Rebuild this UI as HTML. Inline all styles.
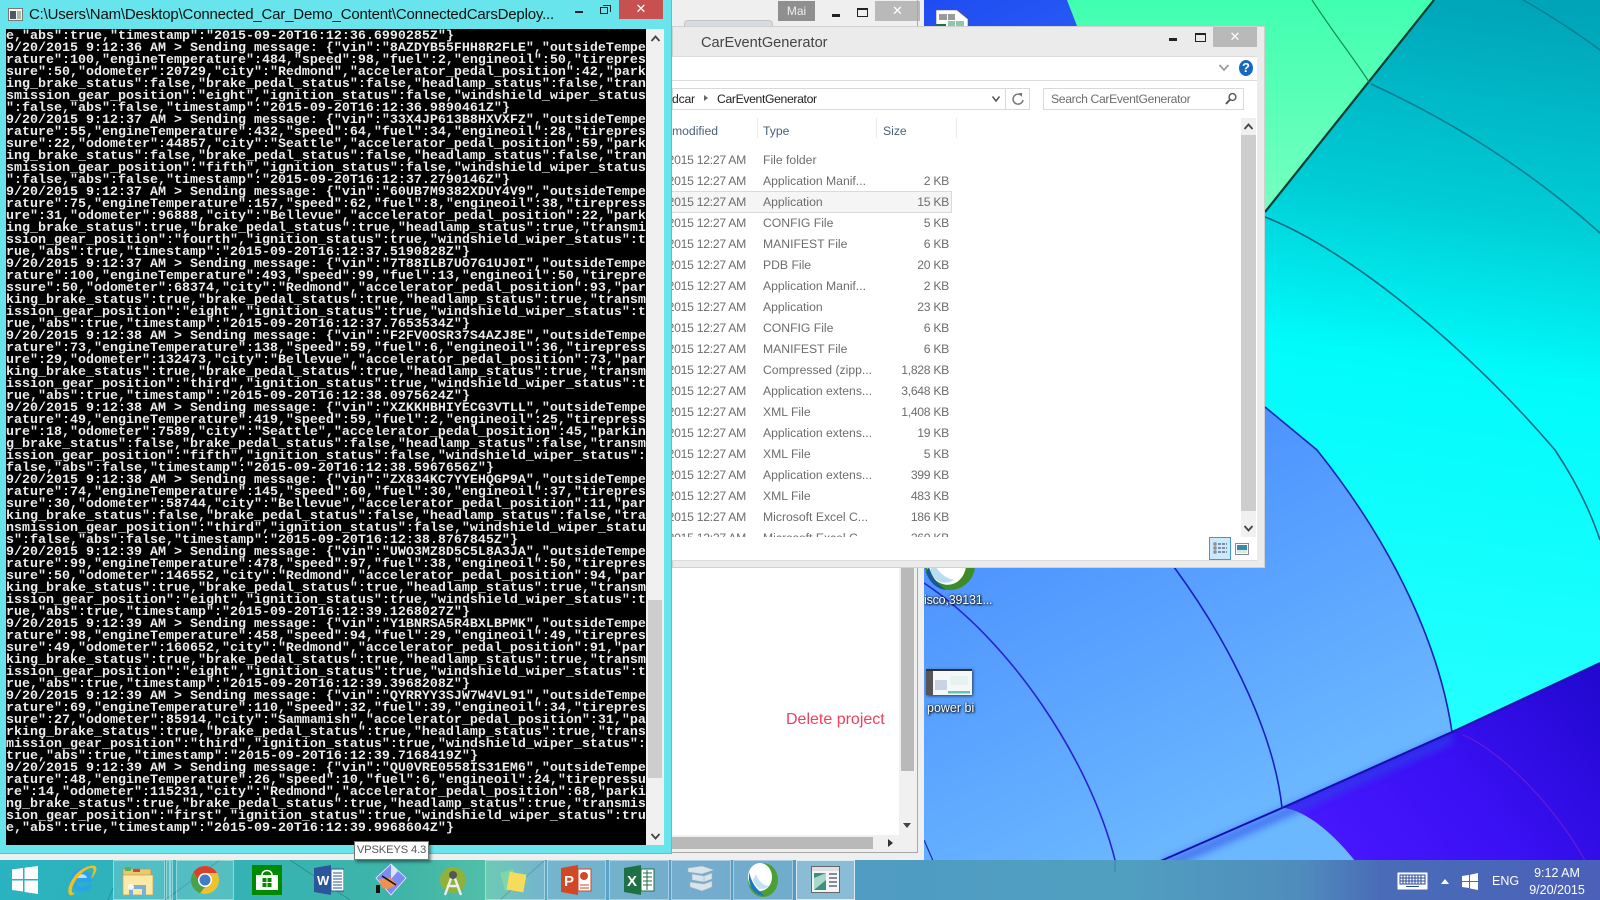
<!DOCTYPE html>
<html><head><meta charset="utf-8"><style>
html,body{margin:0;padding:0;width:1600px;height:900px;overflow:hidden;background:#3f78fa}
*{box-sizing:border-box}
body{font-family:"Liberation Sans",sans-serif;position:relative}
.a{position:absolute}
.r{position:absolute;left:0;width:600px;height:16px;line-height:16px;font-size:12.2px;color:#6d6d6d;white-space:nowrap}
.r i{font-style:normal;position:absolute;top:0}
.r .d{left:-126px;width:200px;text-align:right;letter-spacing:-.28px}
.r .t{left:91px}
.r b{font-weight:normal;position:absolute;left:200px;width:77px;text-align:right;top:0;letter-spacing:-.3px}
.tb{position:absolute;top:860px;height:40px;background:rgba(255,255,255,.16);border:1px solid rgba(255,255,255,.38)}
pre{margin:0}
</style></head><body>

<svg class="a" style="left:0;top:0" width="1600" height="900" viewBox="0 0 1600 900">
<defs>
<linearGradient id="bl" gradientUnits="userSpaceOnUse" x1="924" y1="0" x2="1300" y2="800"><stop offset="0" stop-color="#1f4cf2"/><stop offset=".55" stop-color="#4b90ff"/><stop offset="1" stop-color="#6cb8ff"/></linearGradient>
<linearGradient id="te" gradientUnits="userSpaceOnUse" x1="1500" y1="0" x2="1400" y2="700"><stop offset="0" stop-color="#00a4b8"/><stop offset=".3" stop-color="#00cdd6"/><stop offset=".52" stop-color="#00fbfb"/><stop offset="1" stop-color="#22ffff"/></linearGradient>
<linearGradient id="gr" gradientUnits="userSpaceOnUse" x1="1300" y1="0" x2="1300" y2="220"><stop offset="0" stop-color="#40ffb0"/><stop offset="1" stop-color="#78ffc0"/></linearGradient>
<linearGradient id="in" gradientUnits="userSpaceOnUse" x1="1600" y1="680" x2="1330" y2="900"><stop offset="0" stop-color="#2208d0"/><stop offset=".5" stop-color="#3a10f4"/><stop offset="1" stop-color="#4a18ff"/></linearGradient>
<filter id="sf" x="-20%" y="-20%" width="140%" height="140%"><feGaussianBlur stdDeviation="4"/></filter>
</defs>
<rect width="1600" height="900" fill="url(#bl)"/>
<path d="M1067 0L1434 0L1265 215L1150 215Z" fill="url(#gr)"/>
<path d="M1434 0L1600 0L1600 663L1452 732C1440 650 1397 550 1317 450L1265 407L1200 300L1265 212Z" fill="url(#te)"/>
<path d="M1600 663L1452 732L1282 808C1300 808 1340 830 1382 900L1600 900Z" fill="url(#in)"/>
<path d="M1452 738L1282 814L1163 866" stroke="#2a48e8" stroke-width="10" fill="none" opacity=".6" filter="url(#sf)"/>
<path d="M1434 0L1265 212" stroke="#0c3c34" stroke-width="2.2" fill="none"/>
<path d="M1312 0C1335 35 1355 60 1369 82" stroke="#109050" stroke-width="1.2" fill="none"/>
<path d="M1371 84C1450 120 1530 170 1600 233" stroke="#0a7c90" stroke-width="1.6" fill="none"/>
<path d="M1523 0C1550 15 1580 35 1600 50" stroke="#0a7c90" stroke-width="1.4" fill="none"/>
<path d="M1265 217C1350 250 1470 350 1555 450C1575 480 1590 510 1600 540" stroke="#0a6a80" stroke-width="1.6" fill="none"/>
<path d="M1265 407L1317 450C1397 550 1440 650 1452 732" stroke="#1a20b8" stroke-width="1.6" fill="none"/>
<path d="M1600 663L1452 732L1282 808L1163 860L1067 900" stroke="#1410b0" stroke-width="2" fill="none"/>
<path d="M1174 567C1235 650 1275 740 1282 808" stroke="#1a20c0" stroke-width="1.6" fill="none"/>
<path d="M924 583C1010 640 1090 760 1115 860" stroke="#2a22d0" stroke-width="1.6" fill="none"/>
<path d="M924 840L950 900" stroke="#1a30a0" stroke-width="1.2" fill="none"/>
<path d="M1463 735C1500 750 1560 810 1590 870" stroke="#6a1ad8" stroke-width="1.2" fill="none"/>
</svg>

<!-- desktop icons -->
<svg class="a" style="left:935px;top:8px" width="36" height="22"><path d="M1 2H22L33 11V22H1Z" fill="#fff" stroke="#555" stroke-width=".6"/><rect x="4" y="6" width="8" height="6" fill="#9a9a9a"/><rect x="13" y="6" width="7" height="6" fill="#9a9a9a"/><rect x="13" y="13" width="7" height="7" fill="#8fc8a8"/><rect x="21" y="13" width="8" height="7" fill="#8fc8a8"/><rect x="1" y="16" width="10" height="6" fill="#1f7145"/></svg>
<svg class="a" style="left:924px;top:540px" width="54" height="52"><circle cx="26" cy="25" r="25" fill="#3d8c28"/><ellipse cx="22" cy="21" rx="20" ry="24" fill="#fff" transform="rotate(-14 22 21)"/><path d="M6 30C10 42 20 46 30 40C22 38 16 34 10 24Z" fill="#b8dcf0"/><path d="M2 32C6 44 14 49 22 50C14 44 8 38 5 27Z" fill="#155a96"/></svg>
<div class="a" style="left:924px;top:592px;font-size:12.5px;line-height:16px;letter-spacing:-.2px;color:#fff;text-shadow:1px 1px 2px #000,0 0 2px #000;white-space:nowrap;width:72px;overflow:hidden">isco,39131...</div>
<svg class="a" style="left:926px;top:669px;box-shadow:1px 1px 3px rgba(0,0,0,.6)" width="46" height="26"><rect width="46" height="26" fill="#f6f8f8"/><rect width="46" height="2" fill="#333"/><rect y="2" width="7" height="24" fill="#555"/><rect x="9" y="11" width="12" height="10" fill="#c8d4e6"/><rect x="24" y="7" width="18" height="9" fill="#e8f2f0"/><rect x="22" y="22" width="22" height="2.500" fill="#5fc7b8"/></svg>
<div class="a" style="left:927px;top:700px;font-size:12.5px;line-height:16px;color:#fff;text-shadow:1px 1px 2px #000,0 0 2px #000;white-space:nowrap">power bi</div>

<!-- back window -->
<div class="a" style="left:0;top:0;width:924px;height:860px;background:#efefef"></div>
<div class="a" style="left:684px;top:20px;width:89px;height:6px;background:#d5dde4;border:1px solid #c4c4c4;border-bottom:0;border-radius:4px 4px 0 0"></div>
<div class="a" style="left:778px;top:1px;width:37px;height:20px;background:#8f8f8f;color:#eee;font-size:12px;line-height:20px;text-align:center">Mai</div>
<div class="a" style="left:832px;top:14px;width:8px;height:3px;background:#222"></div>
<div class="a" style="left:857px;top:8px;width:11px;height:9px;border:1.5px solid #222;border-top-width:2.5px"></div>
<div class="a" style="left:875px;top:1px;width:45px;height:20px;background:#b9b9b9;color:#fff;font-size:13px;line-height:20px;text-align:center">&#10005;</div>
<div class="a" style="left:672px;top:560px;width:227px;height:275px;background:#fff"></div>
<div class="a" style="left:899px;top:560px;width:16px;height:275px;background:#f0f0f0"></div>
<div class="a" style="left:901px;top:560px;width:13px;height:211px;background:#b9b9b9"></div>
<div class="a" style="left:903px;top:823px;width:0;height:0;border:4px solid transparent;border-top:5px solid #444;border-bottom:0"></div>
<div class="a" style="left:672px;top:835px;width:243px;height:16px;background:#f0f0f0"></div>
<div class="a" style="left:672px;top:837px;width:201px;height:12px;background:#b9b9b9"></div>
<div class="a" style="left:888px;top:839px;width:0;height:0;border:4px solid transparent;border-left:5px solid #333;border-right:0"></div>
<div class="a" style="left:917px;top:0;width:1px;height:853px;background:#a8a8a8"></div>
<div class="a" style="left:672px;top:852px;width:246px;height:1px;background:#a8a8a8"></div>
<div class="a" style="left:786px;top:710px;font-size:16px;line-height:20px;color:#ee4060;white-space:nowrap">Delete project</div>

<!-- explorer -->
<div class="a" style="left:672px;top:26px;width:593px;height:542px;background:#ebebeb;border:1px solid #d0d0d0;overflow:hidden">
</div>
<div class="a" style="left:701px;top:33px;font-size:14.6px;line-height:20px;color:#444;white-space:nowrap">CarEventGenerator</div>
<div class="a" style="left:1169px;top:38px;width:8px;height:3px;background:#222"></div>
<div class="a" style="left:1195px;top:33px;width:11px;height:9px;border:1.5px solid #222;border-top-width:2.5px"></div>
<div class="a" style="left:1213px;top:27px;width:44px;height:20px;background:#b9b9b9;color:#fff;font-size:13px;line-height:20px;text-align:center">&#10005;</div>
<div class="a" style="left:672px;top:56px;width:585px;height:505px;background:#fff;border-top:1px solid #dcdcdc;border-bottom:1px solid #dcdcdc"></div>
<div class="a" style="left:672px;top:80px;width:585px;height:1px;background:#dcdcdc"></div>
<svg class="a" style="left:1218px;top:64px" width="12" height="8"><path d="M1.5 1L6 6L10.5 1" stroke="#999" stroke-width="1.7" fill="none"/></svg>
<div class="a" style="left:1239px;top:60px;width:14px;height:16px;border-radius:50%;background:#1668c0;color:#fff;font-size:13px;font-weight:bold;line-height:16px;text-align:center">?</div>
<div class="a" style="left:672px;top:88px;width:358px;height:22px;border:1px solid #d9d9d9;background:#fff"></div>
<div class="a" style="left:672px;top:91px;font-size:12.2px;line-height:16px;color:#222;white-space:nowrap;letter-spacing:-.2px">dcar</div>
<div class="a" style="left:704px;top:95px;width:0;height:0;border:3.5px solid transparent;border-left:4px solid #666;border-right:0"></div>
<div class="a" style="left:717px;top:91px;font-size:12.2px;line-height:16px;color:#222;white-space:nowrap;letter-spacing:-.35px">CarEventGenerator</div>
<svg class="a" style="left:991px;top:95px" width="10" height="8"><path d="M1.5 1.5L5 6L8.5 1.5" stroke="#555" stroke-width="1.5" fill="none"/></svg>
<div class="a" style="left:1005px;top:88px;width:1px;height:22px;background:#d9d9d9"></div>
<svg class="a" style="left:1011px;top:92px" width="14" height="14"><path d="M10.5 3.5A5 5 0 1 0 12 8" stroke="#777" stroke-width="1.5" fill="none"/><path d="M8 1L11 1L11 5Z" fill="#777"/></svg>
<div class="a" style="left:1043px;top:88px;width:201px;height:22px;border:1px solid #d9d9d9;background:#fff"></div>
<div class="a" style="left:1051px;top:91px;font-size:12.2px;line-height:16px;color:#6d6d6d;white-space:nowrap;letter-spacing:-.35px">Search CarEventGenerator</div>
<svg class="a" style="left:1224px;top:92px" width="14" height="14"><circle cx="8.5" cy="5" r="3.4" stroke="#555" stroke-width="1.4" fill="none"/><path d="M6 7.5L2 12" stroke="#555" stroke-width="2"/></svg>
<div class="a" style="left:672px;top:123px;font-size:12.2px;line-height:16px;color:#4c607a;white-space:nowrap">modified</div>
<div class="a" style="left:763px;top:123px;font-size:12.2px;line-height:16px;color:#4c607a">Type</div>
<div class="a" style="left:883px;top:123px;font-size:12.2px;line-height:16px;color:#4c607a">Size</div>
<div class="a" style="left:757px;top:118px;width:1px;height:20px;background:#e4ebf2"></div>
<div class="a" style="left:876px;top:118px;width:1px;height:20px;background:#e4ebf2"></div>
<div class="a" style="left:956px;top:118px;width:1px;height:20px;background:#e4ebf2"></div>
<div class="a" style="left:672px;top:191px;width:280px;height:22px;background:#f5f5f5;border:1px solid #dadada;border-left:0"></div>
<div class="a" style="left:672px;top:150px;width:290px;height:387px;overflow:hidden">
<div style="position:absolute;left:0;top:0;width:290px;height:500px">
<div class="r" style="top:2px"><i class="d">9/20/2015 12:27 AM</i><i class="t">File folder</i></div>
<div class="r" style="top:23px"><i class="d">9/20/2015 12:27 AM</i><i class="t">Application Manif...</i><b>2 KB</b></div>
<div class="r" style="top:44px"><i class="d">9/20/2015 12:27 AM</i><i class="t">Application</i><b>15 KB</b></div>
<div class="r" style="top:65px"><i class="d">9/20/2015 12:27 AM</i><i class="t">CONFIG File</i><b>5 KB</b></div>
<div class="r" style="top:86px"><i class="d">9/20/2015 12:27 AM</i><i class="t">MANIFEST File</i><b>6 KB</b></div>
<div class="r" style="top:107px"><i class="d">9/20/2015 12:27 AM</i><i class="t">PDB File</i><b>20 KB</b></div>
<div class="r" style="top:128px"><i class="d">9/20/2015 12:27 AM</i><i class="t">Application Manif...</i><b>2 KB</b></div>
<div class="r" style="top:149px"><i class="d">9/20/2015 12:27 AM</i><i class="t">Application</i><b>23 KB</b></div>
<div class="r" style="top:170px"><i class="d">9/20/2015 12:27 AM</i><i class="t">CONFIG File</i><b>6 KB</b></div>
<div class="r" style="top:191px"><i class="d">9/20/2015 12:27 AM</i><i class="t">MANIFEST File</i><b>6 KB</b></div>
<div class="r" style="top:212px"><i class="d">9/20/2015 12:27 AM</i><i class="t">Compressed (zipp...</i><b>1,828 KB</b></div>
<div class="r" style="top:233px"><i class="d">9/20/2015 12:27 AM</i><i class="t">Application extens...</i><b>3,648 KB</b></div>
<div class="r" style="top:254px"><i class="d">9/20/2015 12:27 AM</i><i class="t">XML File</i><b>1,408 KB</b></div>
<div class="r" style="top:275px"><i class="d">9/20/2015 12:27 AM</i><i class="t">Application extens...</i><b>19 KB</b></div>
<div class="r" style="top:296px"><i class="d">9/20/2015 12:27 AM</i><i class="t">XML File</i><b>5 KB</b></div>
<div class="r" style="top:317px"><i class="d">9/20/2015 12:27 AM</i><i class="t">Application extens...</i><b>399 KB</b></div>
<div class="r" style="top:338px"><i class="d">9/20/2015 12:27 AM</i><i class="t">XML File</i><b>483 KB</b></div>
<div class="r" style="top:359px"><i class="d">9/20/2015 12:27 AM</i><i class="t">Microsoft Excel C...</i><b>186 KB</b></div>
<div class="r" style="top:380px"><i class="d">9/20/2015 12:27 AM</i><i class="t">Microsoft Excel C...</i><b>260 KB</b></div>
</div></div>
<div class="a" style="left:1241px;top:118px;width:15px;height:419px;background:#f0f0f0"></div>
<div class="a" style="left:1241px;top:135px;width:15px;height:376px;background:#cdcdcd"></div>
<svg class="a" style="left:1243px;top:122px" width="11" height="9"><path d="M1.5 7L5.5 2.5L9.5 7" stroke="#444" stroke-width="1.8" fill="none"/></svg>
<svg class="a" style="left:1243px;top:524px" width="11" height="9"><path d="M1.5 2L5.5 6.5L9.5 2" stroke="#444" stroke-width="1.8" fill="none"/></svg>
<svg class="a" style="left:1209px;top:537px" width="42" height="23"><rect x=".5" y=".5" width="21" height="22" fill="#cce8ff" stroke="#3a9bd8"/><path d="M5 6h2v2h-2zM5 10h2v2h-2zM5 14h2v2h-2z" fill="#fff" stroke="#444" stroke-width=".7"/><path d="M9 7h9M9 11h9M9 15h9" stroke="#334" stroke-width="1" stroke-dasharray="3 1"/><rect x="26.500" y="6.500" width="13" height="11" fill="#fff" stroke="#889"/><rect x="28" y="8" width="10" height="5" fill="#3a8aa8"/><rect x="28" y="13" width="10" height="3" fill="#cfeee2"/></svg>

<!-- console -->
<div class="a" style="left:0;top:0;width:672px;height:854px;background:#68e5ec;border-right:1px solid #4cc8d0;border-bottom:1px solid #4cc8d0"></div>
<svg class="a" style="left:8px;top:8px" width="15" height="13"><rect x=".5" y=".5" width="14" height="12" fill="#f4f4f4" stroke="#777"/><rect x="2" y="3" width="6" height="8" fill="#556"/><rect x="9" y="3" width="4" height="8" fill="#aba"/></svg>
<div class="a" style="left:29px;top:5px;font-size:15px;line-height:20px;color:#111;white-space:nowrap;letter-spacing:-.19px">C:\Users\Nam\Desktop\Connected_Car_Demo_Content\ConnectedCarsDeploy...</div>
<div class="a" style="left:575px;top:11px;width:8px;height:2px;background:#222"></div>
<div class="a" style="left:600px;top:7px;width:8px;height:7px;border:1px solid #222;background:#68e5ec"></div>
<div class="a" style="left:603px;top:5px;width:8px;height:7px;border:1px solid #222;border-left:0;border-bottom:0"></div>
<div class="a" style="left:619px;top:0;width:44px;height:19px;background:#c75050;color:#fff;font-size:13px;line-height:18px;text-align:center">&#10005;</div>
<div class="a" style="left:646px;top:29px;width:18px;height:816px;background:#f0f0f0"></div>
<div class="a" style="left:648px;top:600px;width:14px;height:178px;background:#cdcdcd"></div>
<svg class="a" style="left:650px;top:34px" width="11" height="9"><path d="M1.5 7L5.5 2.5L9.5 7" stroke="#444" stroke-width="1.8" fill="none"/></svg>
<svg class="a" style="left:650px;top:832px" width="11" height="9"><path d="M1.5 2L5.5 6.5L9.5 2" stroke="#444" stroke-width="1.8" fill="none"/></svg>
<pre class="a" style="left:6px;top:29px;width:640px;height:816px;padding-top:2px;background:#000;color:#ececec;overflow:hidden;font:bold 13.334px/12px 'Liberation Mono',monospace">e,"abs":true,"timestamp":"2015-09-20T16:12:36.6990285Z"}
9/20/2015 9:12:36 AM &gt; Sending message: {"vin":"8AZDYB55FHH8R2FLE","outsideTempe
rature":100,"engineTemperature":484,"speed":98,"fuel":2,"engineoil":50,"tirepres
sure":50,"odometer":20729,"city":"Redmond","accelerator_pedal_position":42,"park
ing_brake_status":false,"brake_pedal_status":false,"headlamp_status":false,"tran
smission_gear_position":"eight","ignition_status":false,"windshield_wiper_status
":false,"abs":false,"timestamp":"2015-09-20T16:12:36.9890461Z"}
9/20/2015 9:12:37 AM &gt; Sending message: {"vin":"33X4JP613B8HXVXFZ","outsideTempe
rature":55,"engineTemperature":432,"speed":64,"fuel":34,"engineoil":28,"tirepres
sure":22,"odometer":44857,"city":"Seattle","accelerator_pedal_position":59,"park
ing_brake_status":false,"brake_pedal_status":false,"headlamp_status":false,"tran
smission_gear_position":"fifth","ignition_status":false,"windshield_wiper_status
":false,"abs":false,"timestamp":"2015-09-20T16:12:37.2790146Z"}
9/20/2015 9:12:37 AM &gt; Sending message: {"vin":"60UB7M9382XDUY4V9","outsideTempe
rature":75,"engineTemperature":157,"speed":62,"fuel":8,"engineoil":38,"tirepress
ure":31,"odometer":96888,"city":"Bellevue","accelerator_pedal_position":22,"park
ing_brake_status":true,"brake_pedal_status":true,"headlamp_status":true,"transmi
ssion_gear_position":"fourth","ignition_status":true,"windshield_wiper_status":t
rue,"abs":true,"timestamp":"2015-09-20T16:12:37.5190828Z"}
9/20/2015 9:12:37 AM &gt; Sending message: {"vin":"7T88ILB7UO7G1UJ0I","outsideTempe
rature":100,"engineTemperature":493,"speed":99,"fuel":13,"engineoil":50,"tirepre
ssure":50,"odometer":68374,"city":"Redmond","accelerator_pedal_position":93,"par
king_brake_status":true,"brake_pedal_status":true,"headlamp_status":true,"transm
ission_gear_position":"eight","ignition_status":true,"windshield_wiper_status":t
rue,"abs":true,"timestamp":"2015-09-20T16:12:37.7653534Z"}
9/20/2015 9:12:38 AM &gt; Sending message: {"vin":"F2FV0OSR37S4AZJ8E","outsideTempe
rature":73,"engineTemperature":138,"speed":59,"fuel":6,"engineoil":36,"tirepress
ure":29,"odometer":132473,"city":"Bellevue","accelerator_pedal_position":73,"par
king_brake_status":true,"brake_pedal_status":true,"headlamp_status":true,"transm
ission_gear_position":"third","ignition_status":true,"windshield_wiper_status":t
rue,"abs":true,"timestamp":"2015-09-20T16:12:38.0975624Z"}
9/20/2015 9:12:38 AM &gt; Sending message: {"vin":"XZKKHBHIYECG3VTLL","outsideTempe
rature":49,"engineTemperature":419,"speed":59,"fuel":2,"engineoil":25,"tirepress
ure":18,"odometer":7589,"city":"Seattle","accelerator_pedal_position":45,"parkin
g_brake_status":false,"brake_pedal_status":false,"headlamp_status":false,"transm
ission_gear_position":"fifth","ignition_status":false,"windshield_wiper_status":
false,"abs":false,"timestamp":"2015-09-20T16:12:38.5967656Z"}
9/20/2015 9:12:38 AM &gt; Sending message: {"vin":"ZX834KC7YYEHQGP9A","outsideTempe
rature":74,"engineTemperature":145,"speed":60,"fuel":30,"engineoil":37,"tirepres
sure":30,"odometer":58744,"city":"Bellevue","accelerator_pedal_position":11,"par
king_brake_status":false,"brake_pedal_status":false,"headlamp_status":false,"tra
nsmission_gear_position":"third","ignition_status":false,"windshield_wiper_statu
s":false,"abs":false,"timestamp":"2015-09-20T16:12:38.8767845Z"}
9/20/2015 9:12:39 AM &gt; Sending message: {"vin":"UWO3MZ8D5C5L8A3JA","outsideTempe
rature":99,"engineTemperature":478,"speed":97,"fuel":38,"engineoil":50,"tirepres
sure":50,"odometer":146552,"city":"Redmond","accelerator_pedal_position":94,"par
king_brake_status":true,"brake_pedal_status":true,"headlamp_status":true,"transm
ission_gear_position":"eight","ignition_status":true,"windshield_wiper_status":t
rue,"abs":true,"timestamp":"2015-09-20T16:12:39.1268027Z"}
9/20/2015 9:12:39 AM &gt; Sending message: {"vin":"Y1BNRSA5R4BXLBPMK","outsideTempe
rature":98,"engineTemperature":458,"speed":94,"fuel":29,"engineoil":49,"tirepres
sure":49,"odometer":160652,"city":"Redmond","accelerator_pedal_position":91,"par
king_brake_status":true,"brake_pedal_status":true,"headlamp_status":true,"transm
ission_gear_position":"eight","ignition_status":true,"windshield_wiper_status":t
rue,"abs":true,"timestamp":"2015-09-20T16:12:39.3968208Z"}
9/20/2015 9:12:39 AM &gt; Sending message: {"vin":"QYRRYY3SJW7W4VL91","outsideTempe
rature":69,"engineTemperature":110,"speed":32,"fuel":39,"engineoil":34,"tirepres
sure":27,"odometer":85914,"city":"Sammamish","accelerator_pedal_position":31,"pa
rking_brake_status":true,"brake_pedal_status":true,"headlamp_status":true,"trans
mission_gear_position":"third","ignition_status":true,"windshield_wiper_status":
true,"abs":true,"timestamp":"2015-09-20T16:12:39.7168419Z"}
9/20/2015 9:12:39 AM &gt; Sending message: {"vin":"QU0VRE0558IS31EM6","outsideTempe
rature":48,"engineTemperature":26,"speed":10,"fuel":6,"engineoil":24,"tirepressu
re":14,"odometer":115231,"city":"Redmond","accelerator_pedal_position":68,"parki
ng_brake_status":true,"brake_pedal_status":true,"headlamp_status":true,"transmis
sion_gear_position":"first","ignition_status":true,"windshield_wiper_status":tru
e,"abs":true,"timestamp":"2015-09-20T16:12:39.9968604Z"}</pre>

<!-- taskbar -->
<div class="a" style="left:0;top:860px;width:1600px;height:40px;background:linear-gradient(90deg,#29b3c0 0,#33b2b8 200px,#3fb4a8 400px,#52bfa8 490px,#5aa8c4 540px,#5a9cc4 700px,#4f9cc2 900px,#509fc0 1120px,#4f8dbc 1300px,#4a6cb8 1380px,#4b60b8 1600px)"></div>
<svg class="a" style="left:0;top:860px" width="1600" height="40"><path d="M108 40L113 28M220 0L165 40M290 0L350 40M545 0L500 40M1115 0V12" stroke="rgba(20,60,90,.25)" stroke-width="1.2" fill="none"/></svg>
<svg class="a" style="left:11px;top:866px" width="28" height="28"><path d="M1 3.5L12 2V13H1ZM13.5 1.8L27 0V13H13.5ZM1 14.5H12V25.5L1 24ZM13.5 14.5H27V28L13.5 26Z" fill="#fff"/></svg>
<svg class="a" style="left:65px;top:863px" width="34" height="34" viewBox="0 0 34 34"><path d="M11 14C12 8 20 6 24 10C26 12 27 16 26 19H11C11 25 20 26 24 21L27 23C21 31 7 29 6 19C5 10 13 5 20 5" fill="#29a3e8" stroke="#29a3e8"/><path d="M11 15H22C21 10 13 10 11 15Z" fill="#bdf"/><path d="M4 31C1 26 8 12 16 7C22 3 30 1 31 4C33 7 28 14 26 16C28 10 30 6 27 5C20 4 6 20 7 28C7 30 8 30 10 30C7 33 5 33 4 31Z" fill="#f0c020"/></svg>
<div class="tb" style="left:113px;width:52px"></div>
<div class="tb" style="left:166px;width:4px"></div>
<div class="tb" style="left:170px;width:3px"></div>
<svg class="a" style="left:122px;top:866px" width="34" height="30"><rect x="1" y="3" width="28" height="11" fill="#e9c870" stroke="#b89040" stroke-width=".6"/><rect x="3" y="1" width="6" height="4" fill="#5fae4f"/><rect x="11" y="3" width="7" height="3" fill="#d04a30"/><path d="M1 9H31V29H1Z" fill="#fbe9a6" stroke="#caa050" stroke-width=".7"/><path d="M7 29V19H24V29H20V23H11V29Z" fill="#7ab0d4"/><circle cx="9" cy="21" r="3" fill="#fff" opacity=".9"/></svg>
<div class="tb" style="left:176px;width:58px"></div>
<svg class="a" style="left:190px;top:865px" width="30" height="30" viewBox="0 0 30 30"><circle cx="15" cy="15" r="14" fill="#ecc22e"/><path d="M15 1A14 14 0 0 1 27 8H15A7 7 0 0 0 8 15L3.500 7A14 14 0 0 1 15 1Z" fill="#d8402e"/><path d="M3.500 7L9 17A7 7 0 0 0 15 22L10 28.200A14 14 0 0 1 3.500 7Z" fill="#4ba04a"/><circle cx="15" cy="15" r="7" fill="#fff"/><circle cx="15" cy="15" r="5.500" fill="#3f7dc8"/></svg>
<svg class="a" style="left:252px;top:865px" width="30" height="30"><rect width="30" height="30" fill="#008a00"/><path d="M4 10H26V25H4Z" fill="#fff"/><path d="M10 10C10 4 20 4 20 10" stroke="#fff" stroke-width="1.5" fill="none"/><path d="M10.500 13H14.500V17H10.500ZM15.500 13H19.500V17H15.500ZM10.500 18H14.500V22H10.500ZM15.500 18H19.500V22H15.500Z" fill="#008a00"/></svg>
<svg class="a" style="left:314px;top:865px" width="30" height="30"><path d="M0 3L17 0V30L0 27Z" fill="#2b579a"/><rect x="17" y="4" width="13" height="22" fill="#fff" stroke="#2b579a"/><path d="M19 8H28M19 11H28M19 14H28M19 17H28M19 20H28M19 23H28" stroke="#2b579a" stroke-width="1"/><text x="3" y="20" font-family="Liberation Sans" font-size="13" font-weight="bold" fill="#fff">W</text></svg>
<svg class="a" style="left:374px;top:863px" width="34" height="34"><path d="M17 1L32 15L17 32L2 15Z" fill="#7d8cf4" stroke="#eef" stroke-width=".8"/><path d="M17 1L24 8L17 16Z" fill="#dfe4ff"/><path d="M5 16L17 15L23 22L14 26L8 25Z" fill="#f09050"/><path d="M8 13L22 22" stroke="#111" stroke-width="1.6"/><rect x="2" y="22" width="4" height="8" fill="#111"/></svg>
<svg class="a" style="left:439px;top:866px" width="28" height="32"><circle cx="14" cy="14" r="13" fill="#8fb33a"/><path d="M14 7L6 29M14 7L22 29M8 20H20" stroke="#eee" stroke-width="2.400" fill="none"/><circle cx="14" cy="9" r="4" fill="#555"/></svg>
<div class="tb" style="left:485px;width:60px"></div>
<svg class="a" style="left:498px;top:867px" width="32" height="28"><path d="M2 6L15 2L19 20L7 24Z" fill="#7fd6a8"/><path d="M10 6H27V24H10Z" transform="rotate(10 18 15)" fill="#f7db5c"/></svg>
<div class="tb" style="left:547px;width:59px"></div>
<svg class="a" style="left:561px;top:865px" width="32" height="30"><path d="M0 3L17 0V30L0 27Z" fill="#d24726"/><rect x="17" y="4" width="13" height="22" fill="#fff" stroke="#d24726"/><circle cx="23" cy="11" r="4" fill="#d24726"/><path d="M19 20H28M19 23H28" stroke="#d24726"/><text x="3" y="21" font-family="Liberation Sans" font-size="15" font-weight="bold" fill="#fff">P</text></svg>
<div class="tb" style="left:609px;width:60px"></div>
<svg class="a" style="left:624px;top:865px" width="32" height="30"><path d="M0 3L17 0V30L0 27Z" fill="#1e7145"/><rect x="17" y="4" width="13" height="22" fill="#fff" stroke="#1e7145"/><path d="M19 8H28M19 12H28M19 16H28M19 20H28M23 5V25" stroke="#1e7145"/><text x="3" y="21" font-family="Liberation Sans" font-size="15" font-weight="bold" fill="#fff">X</text></svg>
<div class="tb" style="left:671px;width:60px"></div>
<svg class="a" style="left:686px;top:865px" width="30" height="30"><path d="M2 3L16 1L28 5L16 9L2 7ZM6 9L18 11V17L6 15ZM4 17L18 19L26 16V22L16 26L4 22ZM18 11L26 8V14L18 17Z" fill="#d8e4ea" stroke="#9cb4c4" stroke-width=".6"/></svg>
<div class="tb" style="left:733px;width:60px"></div>
<svg class="a" style="left:747px;top:862px" width="32" height="36"><ellipse cx="16" cy="18" rx="15" ry="17" fill="#4c9f34"/><ellipse cx="13" cy="15" rx="12" ry="14" fill="#fff"/><path d="M2 18C4 30 12 34 18 34C10 28 5 22 2 10Z" fill="#1b78c0"/><path d="M6 18C9 26 15 30 22 24C16 24 11 18 9 12Z" fill="#bfe2f2"/></svg>
<div class="tb" style="left:796px;width:59px;background:rgba(255,255,255,.32);border-color:rgba(255,255,255,.7)"></div>
<svg class="a" style="left:811px;top:866px" width="30" height="28"><rect x=".5" y=".5" width="28" height="26" fill="#f4f4f4" stroke="#666"/><rect x="1" y="1" width="27" height="4" fill="#e0e0e0"/><path d="M3 7H15V24H3Z" fill="#3f8f80"/><path d="M3 12L15 7V14L3 24Z" fill="#a7d8c8"/><path d="M18 8H26M18 12H26M18 16H26M18 20H26" stroke="#667" stroke-width="1.4"/></svg>

<svg class="a" style="left:1397px;top:872px" width="31" height="18"><rect x=".5" y=".5" width="30" height="17" fill="#fff"/><path d="M3 3h25v9H3zM3 6h25M3 9h25M6 3v9M9 3v9M12 3v9M15 3v9M18 3v9M21 3v9M24 3v9M9 14.500h13" stroke="#2a4a9c" fill="none" stroke-width="1"/></svg>
<div class="a" style="left:1441px;top:879px;width:0;height:0;border:4px solid transparent;border-bottom:5px solid #fff;border-top:0"></div>
<svg class="a" style="left:1462px;top:873px" width="17" height="17"><path d="M0 3L7 2V8H0ZM8 1.800L16 0V8H8ZM0 9H7V15L0 14ZM8 9H16V17L8 15.500Z" fill="#fff"/></svg>
<div class="a" style="left:1492px;top:873px;font-size:12.5px;line-height:16px;color:#fff">ENG</div>
<div class="a" style="left:1517px;top:865px;width:80px;text-align:center;font-size:12.5px;line-height:17px;color:#fff">9:12 AM<br>9/20/2015</div>

<div class="a" style="left:354px;top:841px;width:75px;height:19px;background:#fff;border:1px solid #767676;box-shadow:2px 2px 3px rgba(0,0,0,.45);font-size:11.2px;letter-spacing:-.15px;line-height:17px;text-align:center;color:#575757;white-space:nowrap">VPSKEYS 4.3</div>
</body></html>
